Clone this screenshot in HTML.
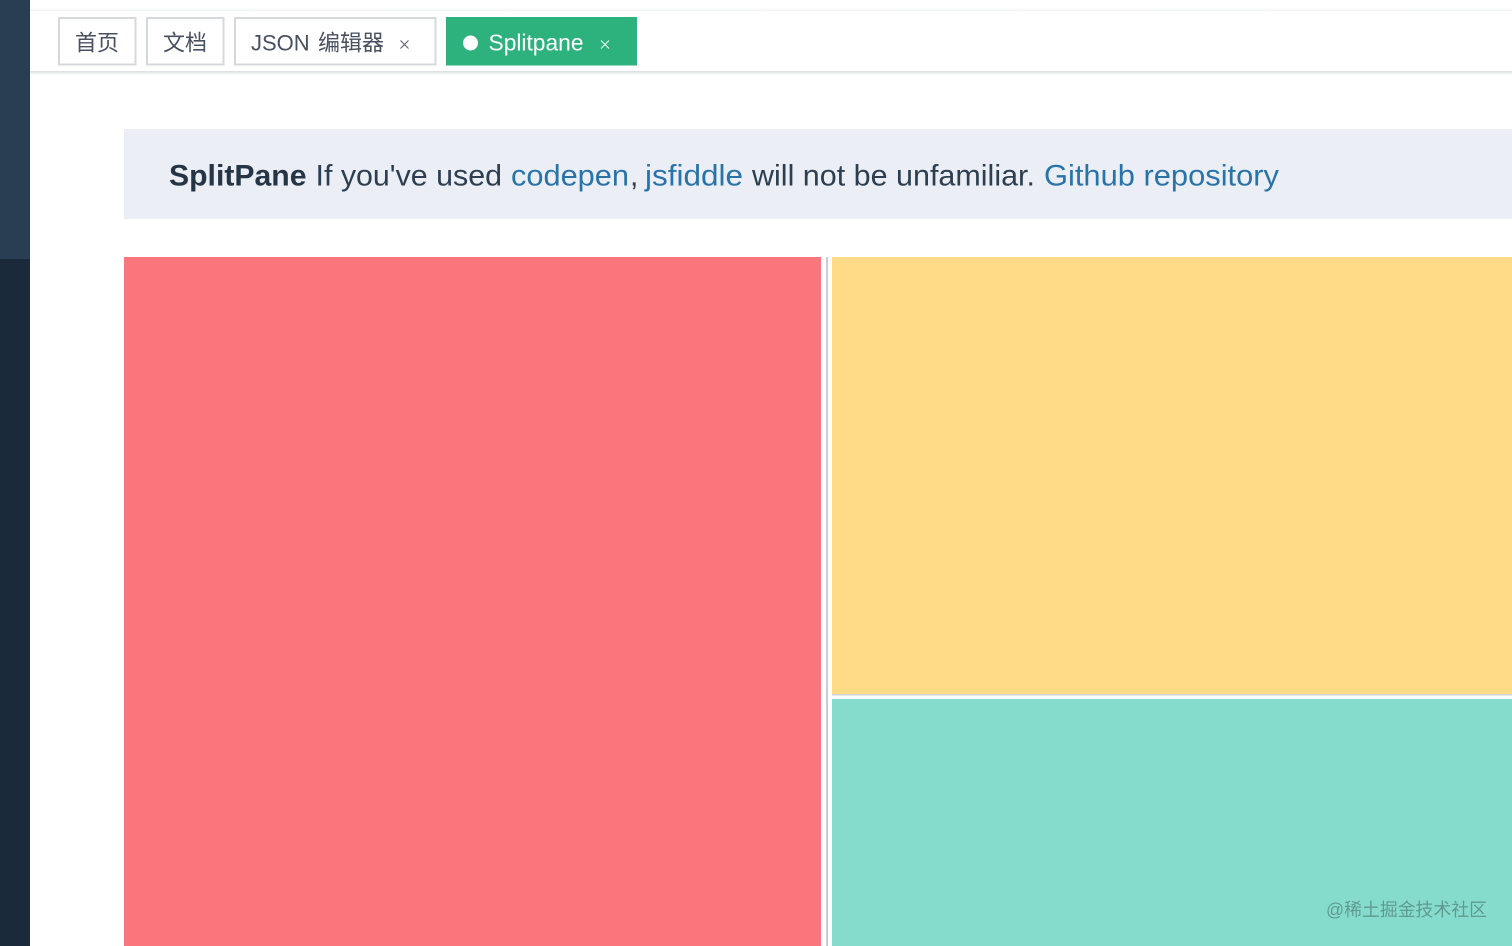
<!DOCTYPE html>
<html lang="zh">
<head>
<meta charset="utf-8">
<title>Splitpane</title>
<style>
html,body{margin:0;padding:0;background:#fff;width:1512px;height:946px;overflow:hidden}
svg{display:block;position:absolute;left:0;top:0}
text{font-family:"Liberation Sans","Noto Sans CJK SC",sans-serif;filter:blur(.3px)}
</style>
</head>
<body>
<svg width="1512" height="946" viewBox="0 0 1512 946" xmlns="http://www.w3.org/2000/svg">
  <defs>
    <linearGradient id="hs" x1="0" y1="0" x2="0" y2="1">
      <stop offset="0" stop-color="#d9dcdf"/>
      <stop offset="1" stop-color="#ffffff"/>
    </linearGradient>
    <linearGradient id="ht" x1="0" y1="0" x2="0" y2="1">
      <stop offset="0" stop-color="#ffffff"/>
      <stop offset="1" stop-color="#f0f1f2"/>
    </linearGradient>
  </defs>

  <rect width="1512" height="946" fill="#ffffff"/>

  <!-- sidebar -->
  <rect x="0" y="0" width="30" height="259" fill="#2a3e53"/>
  <rect x="0" y="259" width="30" height="687" fill="#1b2a3a"/>

  <!-- top bar edges -->
  <rect x="30" y="8" width="1482" height="3" fill="url(#ht)"/>
  <rect x="30" y="71" width="1482" height="4" fill="url(#hs)"/>

  <!-- tabs -->
  <rect x="59" y="18" width="76.500" height="46.500" fill="#fff" stroke="#d5d8dc" stroke-width="2"/>
  <text x="75" y="50.500" font-size="22" fill="#495060" textLength="44">首页</text>

  <rect x="147" y="18" width="76.500" height="46.500" fill="#fff" stroke="#d5d8dc" stroke-width="2"/>
  <text x="163" y="50.500" font-size="22" fill="#495060" textLength="44">文档</text>

  <rect x="235" y="18" width="200.500" height="46.500" fill="#fff" stroke="#d5d8dc" stroke-width="2"/>
  <text x="251" y="50.500" font-size="22" fill="#495060">JSON</text>
  <text x="318" y="50.500" font-size="22" fill="#495060" textLength="66">编辑器</text>
  <path d="M400.500 40.500L408.500 48.500M408.500 40.500L400.500 48.500" stroke="#5a6270" stroke-width="1.100" fill="none"/>

  <rect x="446" y="17" width="191" height="48.500" fill="#2db17d"/>
  <circle cx="470.500" cy="43" r="7.500" fill="#ffffff"/>
  <text x="488.500" y="50.500" font-size="23" fill="#ffffff" textLength="95" lengthAdjust="spacingAndGlyphs">Splitpane</text>
  <path d="M601 40.500L609 48.500M609 40.500L601 48.500" stroke="#e6f6ef" stroke-width="1.100" fill="none"/>

  <!-- notice -->
  <rect x="124" y="129" width="1388" height="90" fill="#ebeff5"/>
  <text x="169" y="185.500" font-size="30" font-weight="700" fill="#253545" textLength="137.500" lengthAdjust="spacingAndGlyphs">SplitPane</text>
  <text x="315.500" y="185.500" font-size="30" fill="#2c3e50" textLength="186.500" lengthAdjust="spacingAndGlyphs">If you've used</text>
  <text x="511" y="185.500" font-size="30" fill="#2973a8" textLength="118" lengthAdjust="spacingAndGlyphs">codepen</text>
  <text x="630" y="185.500" font-size="30" fill="#2c3e50">,</text>
  <text x="645" y="185.500" font-size="30" fill="#2973a8" textLength="98" lengthAdjust="spacingAndGlyphs">jsfiddle</text>
  <text x="752" y="185.500" font-size="30" fill="#2c3e50" textLength="283" lengthAdjust="spacingAndGlyphs">will not be unfamiliar.</text>
  <text x="1044" y="185.500" font-size="30" fill="#2973a8" textLength="235" lengthAdjust="spacingAndGlyphs">Github repository</text>

  <!-- split panes -->
  <rect x="124" y="257" width="697" height="689" fill="#fb767c"/>
  <rect x="826" y="257" width="2" height="689" fill="#c9cdd1"/>
  <rect x="832" y="257" width="680" height="437" fill="#ffdb88"/>
  <rect x="832" y="694" width="680" height="1.500" fill="#d0d3d6"/>
  <rect x="832" y="699" width="680" height="247" fill="#86dccc"/>

  <!-- watermark -->
  <text x="1326" y="916" font-size="18" fill="#5f9b90" textLength="161" lengthAdjust="spacingAndGlyphs">@稀土掘金技术社区</text>
</svg>
</body>
</html>
